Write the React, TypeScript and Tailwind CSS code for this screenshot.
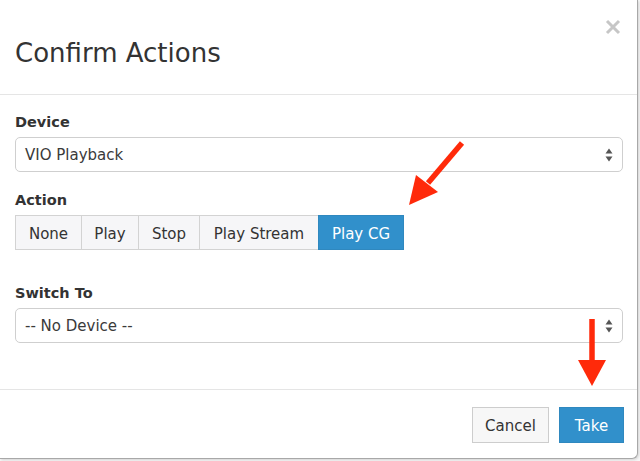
const actions = [
  { name: "None", w: "w-[67px]" },
  { name: "Play", w: "w-[58px]" },
  { name: "Stop", w: "w-[62px]" },
  { name: "Play Stream", w: "w-[120px]" },
  { name: "Play CG", w: "w-[86px]" },
];

function SelectArrows() {
  return (
    <svg width="8" height="14" viewBox="0 0 8 14" className="shrink-0">
      <path d="M4 0.5 L7.5 5.5 L0.5 5.5 Z" fill="#555" />
      <path d="M4 13.5 L7.5 8.5 L0.5 8.5 Z" fill="#555" />
    </svg>
  );
}

function FakeSelect({ value }: { value: string }) {
  return (
    <div className="flex h-[35px] items-center justify-between rounded-[5px] border border-[#cfcfcf] bg-white px-[9px] text-[15px] text-[#3a3a3a]">
      <span className="pt-[2px]">{value}</span>
      <SelectArrows />
    </div>
  );
}

function Label({ children }: { children: React.ReactNode }) {
  return (
    <div className="mb-[5px] h-[20px] text-[14.5px] font-bold leading-[20px] text-[#333]">
      {children}
    </div>
  );
}

export default function App() {
  const active = "Play CG";
  return (
    <div
      className="relative h-[461px] w-[640px] overflow-hidden bg-[#f7f7f7]"
      style={{ fontFamily: '"DejaVu Sans", Verdana, sans-serif' }}
    >
      <div className="relative h-[459px] w-[638px] rounded-br-[6px] border-r border-b border-[#a8a8a8] bg-white shadow-[1px_1px_3px_rgba(0,0,0,0.15)]">
        {/* header */}
        <div className="border-b border-[#e5e5e5] pb-[26px] pl-[15px] pt-[38px]">
          <h4 className="text-[26px] font-normal leading-[30px] text-[#333]">Confirm Actions</h4>
        </div>
        <button className="absolute right-[16px] top-[19px] p-0">
          <svg width="16" height="16" viewBox="0 0 16 16">
            <path d="M2 2 L14 14 M14 2 L2 14" stroke="#c6c6c6" strokeWidth="3" />
          </svg>
        </button>

        {/* body */}
        <div className="pb-[46px] pl-[15px] pr-[14px] pt-[17px]">
          <Label>Device</Label>
          <FakeSelect value="VIO Playback" />

          <div className="mt-[18px]">
            <Label>Action</Label>
            <div className="flex h-[35px]">
              {actions.map((a, i) => (
                <button
                  key={a.name}
                  className={
                    (a.name === active
                      ? "relative z-10 border-[#2f88bf] bg-[#3190cb] text-white"
                      : "border-[#d3d3d3] bg-[#f6f6f8] text-[#333]") +
                    " " +
                    a.w +
                    " border pt-[3px] text-center text-[15px] leading-none" +
                    (i > 0 ? " -ml-px" : "")
                  }
                >
                  {a.name}
                </button>
              ))}
            </div>
          </div>

          <div className="mt-[33px]">
            <Label>Switch To</Label>
            <FakeSelect value="-- No Device --" />
          </div>
        </div>

        {/* footer */}
        <div className="flex justify-end gap-[10px] border-t border-[#e5e5e5] pb-[15px] pr-[13px] pt-[17px]">
          <button className="h-[36px] w-[77px] border border-[#cdcdcd] bg-[#f7f7f7] pt-[2px] text-[15px] text-[#333]">
            Cancel
          </button>
          <button className="h-[36px] w-[65px] border border-[#2f88bf] bg-[#3190cb] pt-[2px] text-[15px] text-white">
            Take
          </button>
        </div>
      </div>

      {/* annotation arrows */}
      <svg className="pointer-events-none absolute inset-0" width="640" height="461" viewBox="0 0 640 461">
        <line x1="462" y1="143" x2="428" y2="183" stroke="#ff2a0a" strokeWidth="5.5" />
        <path d="M409 205 L416 175 L438 192 Z" fill="#ff2a0a" />
        <line x1="592" y1="319" x2="592" y2="362" stroke="#ff2a0a" strokeWidth="5.5" />
        <path d="M578 360 L606 360 L592 386 Z" fill="#ff2a0a" />
      </svg>
    </div>
  );
}
